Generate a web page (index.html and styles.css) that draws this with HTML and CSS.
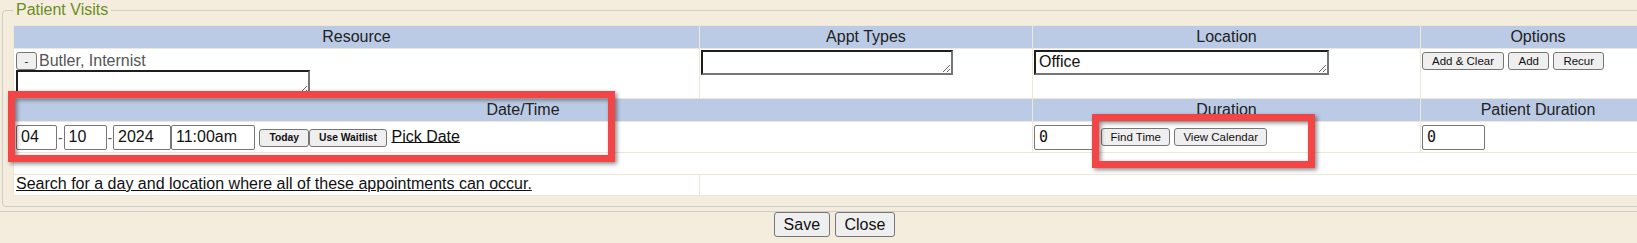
FILE: index.html
```html
<!DOCTYPE html>
<html lang="en">
<head>
  <meta charset="UTF-8" />
  <meta name="viewport" content="width=device-width, initial-scale=1.0"/>
  <title>Patient Visits</title>
  <link rel="stylesheet" href="styles.css">
</head>
<body>
  <div class="page">
    <fieldset class="visits">
      <legend>Patient Visits</legend>
      <table class="grid">
        <colgroup>
          <col class="c-res"><col class="c-appt"><col class="c-loc"><col class="c-opt">
        </colgroup>
        <tr class="head">
          <th>Resource</th>
          <th>Appt Types</th>
          <th>Location</th>
          <th>Options</th>
        </tr>
        <tr class="row-res">
          <td class="first">
            <div class="res-line"><button class="btn-sm">-</button><span class="res-name">Butler, Internist</span></div>
            <textarea class="res-box"></textarea>
          </td>
          <td><textarea class="appt-box"></textarea></td>
          <td><textarea class="loc-box">Office</textarea></td>
          <td class="opts"><button class="btn-sm">Add &amp; Clear</button> <button class="btn-sm">Add</button> <button class="btn-sm">Recur</button></td>
        </tr>
        <tr class="head">
          <th colspan="2">Date/Time</th>
          <th>Duration</th>
          <th>Patient Duration</th>
        </tr>
        <tr class="row-date">
          <td colspan="2" class="first"><input class="d-mm" value="04"><span class="sep">-</span><input class="d-dd" value="10"><span class="sep">-</span><input class="d-yy" value="2024"><input class="d-time" value="11:00am"> <button class="btn-xs">Today</button><button class="btn-xs">Use Waitlist</button> <a href="#" class="link">Pick Date</a></td>
          <td><input class="num" value="0"> <button class="btn-sm">Find Time</button> <button class="btn-sm">View Calendar</button></td>
          <td><input class="num" value="0"></td>
        </tr>
        <tr class="row-gap">
          <td colspan="4"></td>
        </tr>
        <tr class="row-search">
          <td class="first"><a href="#" class="link">Search for a day and location where all of these appointments can occur.</a></td>
          <td colspan="3"></td>
        </tr>
      </table>
    </fieldset>
    <div class="actions">
      <button class="btn">Save</button> <button class="btn">Close</button>
    </div>
  </div>

  <div class="mark mark-date"></div>
  <div class="mark mark-dur"></div>
</body>
</html>
```

FILE: styles.css
```css
* {
  box-sizing: border-box;
}
html, body {
  margin: 0;
  padding: 0;
  overflow: hidden;
  background: #f4edde;
  font-family: "Liberation Sans", Arial, sans-serif;
  font-size: 16px;
  color: #111;
}
.page {
  width: max-content;
}
.visits {
  margin: 0 2px;
  padding: 5px 10px 10px;
  border: 1px solid #cfcdc8;
  border-radius: 4px;
}
.visits legend {
  padding: 0 3px;
  line-height: 20px;
  color: #6b8e23;
}
.grid {
  table-layout: fixed;
  width: 1643px;
  border-collapse: separate;
  border-spacing: 1px;
  background: #efe7d6;
}
.c-res { width: 685px; }
.c-appt { width: 332px; }
.c-loc { width: 387px; }
.c-opt { width: 234px; }

.grid th {
  height: 22px;
  padding: 0;
  background: #bbcbe6;
  font-weight: normal;
  color: #222;
  text-align: center;
  line-height: 20px;
}
.grid td {
  background: white;
  padding: 1px;
  vertical-align: top;
}
.grid td.first {
  padding-left: 2px;
}
.row-res td {
  height: 49px;
}
.row-res td.first {
  padding-top: 2px;
}
.row-res td.opts {
  padding-top: 3px;
}
.row-date td {
  height: 30px;
  vertical-align: middle;
  white-space: nowrap;
}
.row-gap td {
  height: 21px;
}
.row-search td {
  height: 20px;
  padding-top: 0;
}

.res-line {
  display: flex;
  align-items: center;
  gap: 2px;
  height: 19px;
}
.res-name {
  font-size: 16px;
  color: #555;
}
textarea {
  display: block;
  height: 25px;
  padding: 1px 3px;
  font-family: "Liberation Sans", Arial, sans-serif;
  font-size: 16px;
  color: #111;
  border-style: solid;
  border-width: 2px;
  border-color: #1e1e1e #767676 #767676 #1e1e1e;
  overflow: hidden;
  background: white;
}
.res-box { width: 294px; height: 26px; }
.appt-box { width: 252px; }
.loc-box { width: 295px; }

input {
  height: 25px;
  padding: 0 4px;
  border: 1px solid #767676;
  border-radius: 2px;
  font-family: "Liberation Sans", Arial, sans-serif;
  font-size: 16px;
  color: #111;
  background: white;
  vertical-align: middle;
}
.d-mm { width: 41px; }
.d-dd { width: 43px; }
.d-yy { width: 58px; }
.d-time { width: 84px; }
.num {
  width: 63px;
  font-family: "DejaVu Sans Mono", "Liberation Mono", monospace;
  font-size: 15px;
}
.sep {
  display: inline-block;
  width: 6.5px;
  font-size: 14px;
  color: #555;
  text-align: center;
  vertical-align: -2px;
}

button {
  font-family: "Liberation Sans", Arial, sans-serif;
  color: #111;
  background: #efefef;
  border: 1px solid #767676;
  border-radius: 3px;
  margin: 0;
}
.btn-sm {
  height: 18px;
  padding: 0 8px;
  font-size: 11.5px;
  line-height: 14px;
}
.opts .btn-sm {
  padding: 0 9px;
  vertical-align: top;
}
.btn-xs {
  height: 18px;
  padding: 0 9px;
  font-size: 10.3px;
  font-weight: bold;
  line-height: 14px;
}
.res-line .btn-sm {
  width: 21px;
  padding: 0;
}
.btn {
  height: 25px;
  padding: 0 9px;
  font-size: 16px;
}
.link {
  color: #111;
  text-decoration: underline;
}

.actions {
  margin-top: 4px;
  border-top: 1px solid #cfcdc8;
  text-align: center;
}

.mark {
  position: absolute;
  border: 7px solid #f34545;
  filter: drop-shadow(2px 2px 2px rgba(0, 0, 0, 0.45));
}
.mark-date {
  left: 8px;
  top: 91px;
  width: 607px;
  height: 71px;
}
.mark-dur {
  left: 1092px;
  top: 114px;
  width: 223px;
  height: 54px;
}
```
